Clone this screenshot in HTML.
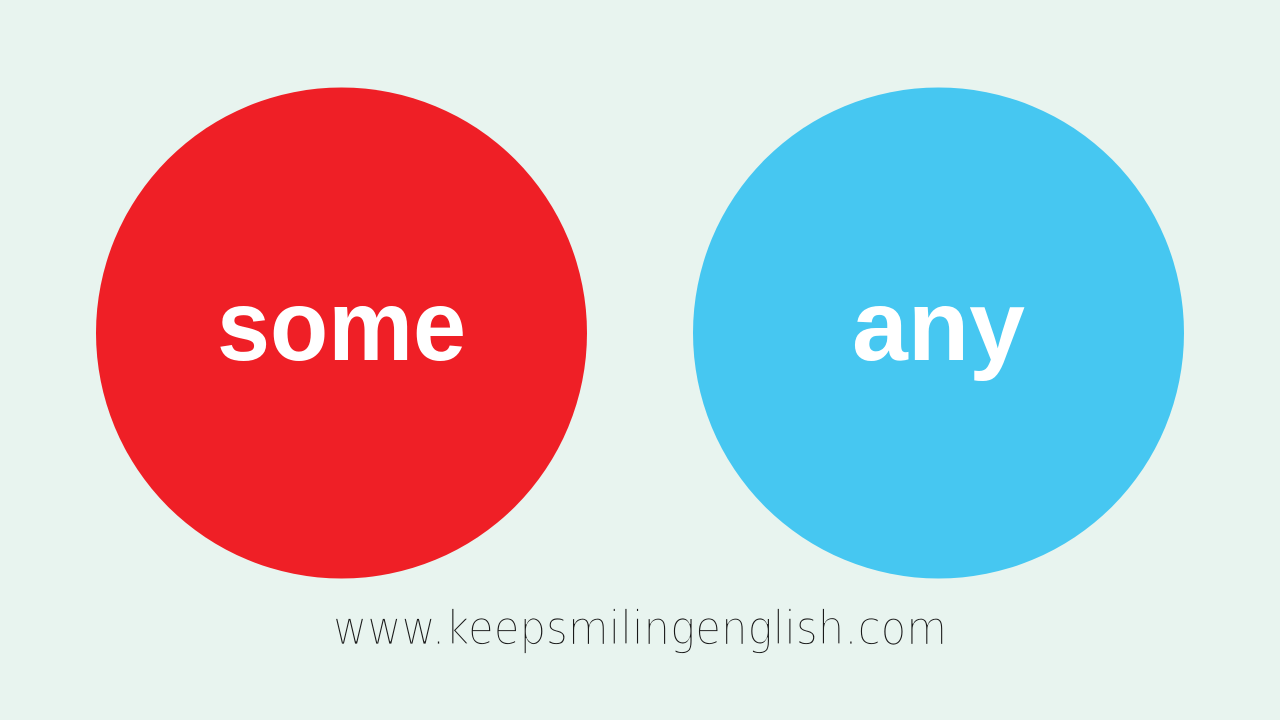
<!DOCTYPE html>
<html><head><meta charset="utf-8"><style>
html,body{margin:0;padding:0;background:#e8f4ef;width:1280px;height:720px;overflow:hidden}
</style></head><body>
<svg width="1280" height="720" viewBox="0 0 1280 720" xmlns="http://www.w3.org/2000/svg">
<rect width="1280" height="720" fill="#e8f4ef"/>
<circle cx="341.5" cy="333" r="245.5" fill="#ef1f26"/>
<circle cx="938.5" cy="333" r="245.5" fill="#46c7f1"/>
<text x="217" y="360" font-family="Liberation Sans, sans-serif" font-weight="bold" font-size="100" fill="#fff" textLength="249" lengthAdjust="spacingAndGlyphs">some</text>
<text x="852" y="360" font-family="Liberation Sans, sans-serif" font-weight="bold" font-size="100" fill="#fff" textLength="173" lengthAdjust="spacingAndGlyphs">any</text>
<text x="333" y="644" font-family="DejaVu Sans, Liberation Sans, sans-serif" font-weight="200" font-size="46" fill="#1a1a1a" textLength="614" lengthAdjust="spacingAndGlyphs" stroke="#e8f4ef" stroke-width="0.8">www.keepsmilingenglish.com</text>
</svg>
</body></html>
